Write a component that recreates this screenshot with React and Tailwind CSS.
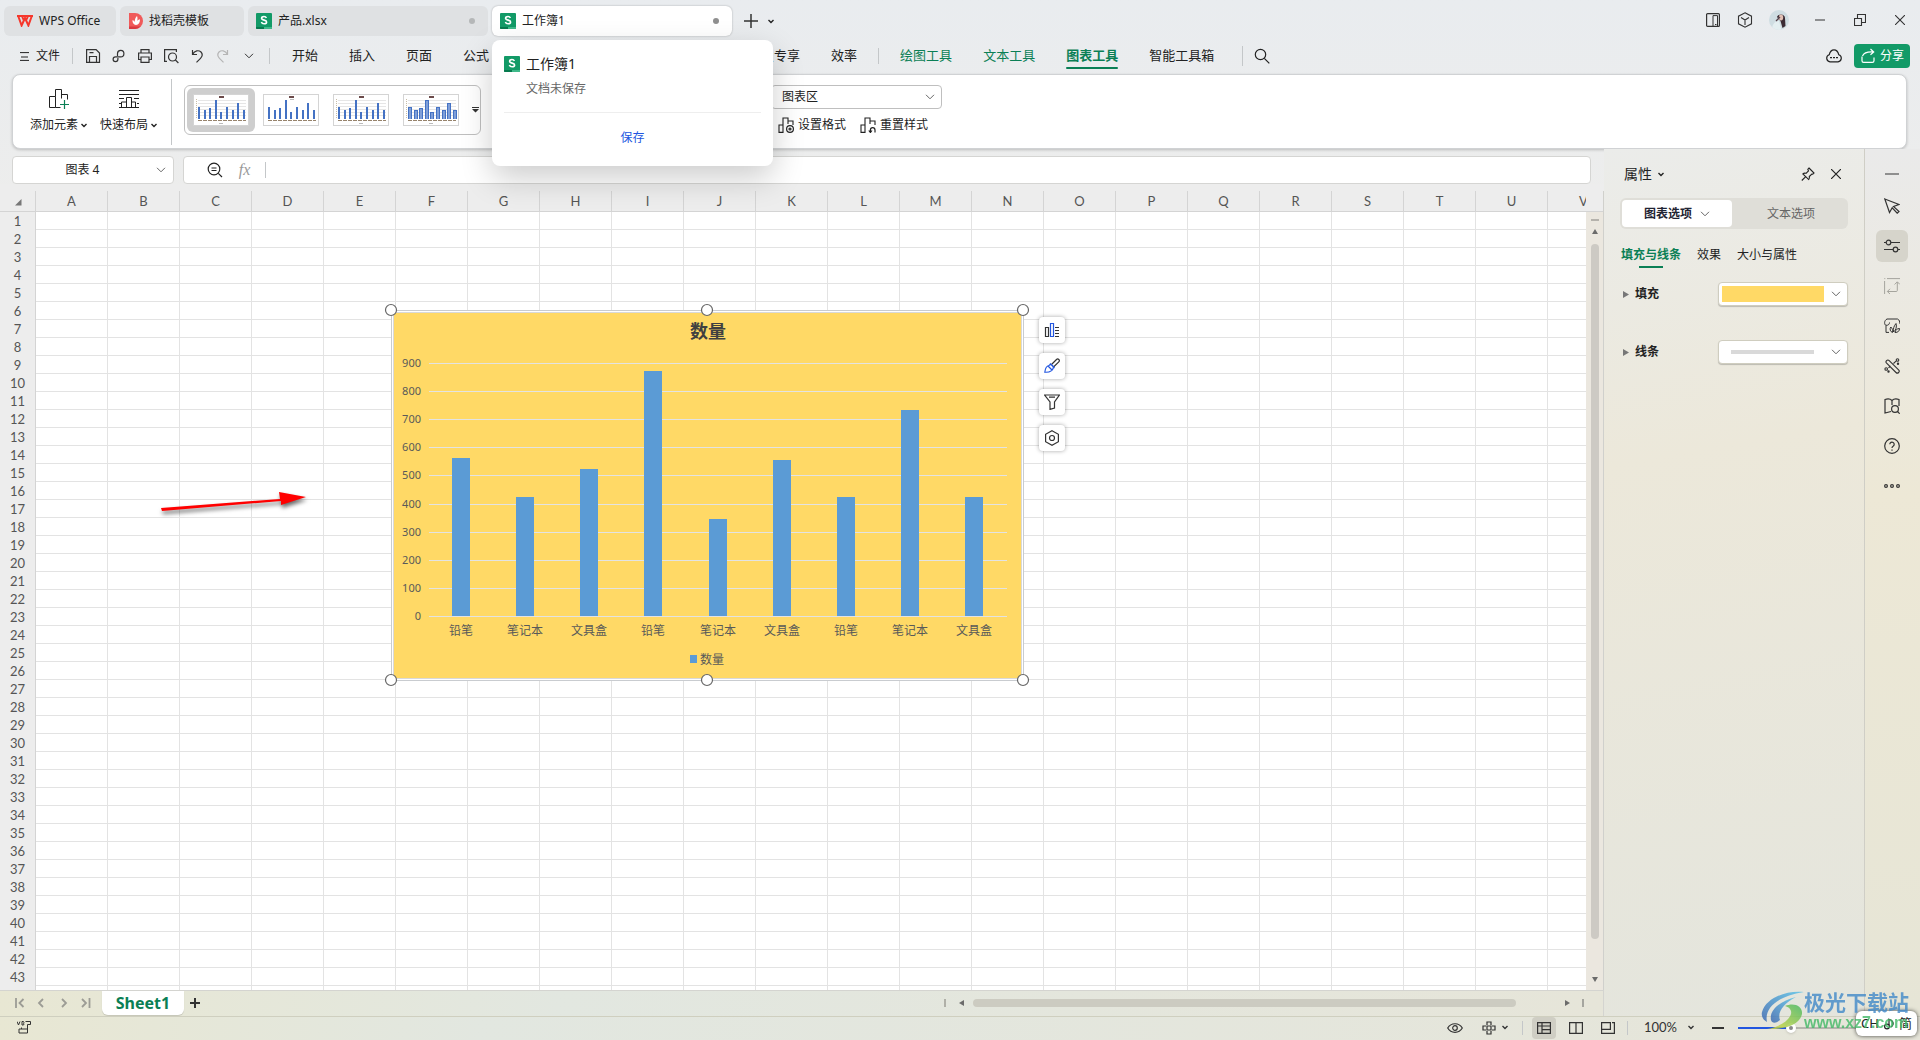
import { useState } from "react";
import clsx from "clsx";

const COLUMNS = "ABCDEFGHIJKLMNOPQRSTUV".split("");
const ROWS = Array.from({ length: 43 }, (_, i) => i + 1);

const MENU = ["开始", "插入", "页面", "公式"];
const MEMBER_MENU = ["会员专享", "效率"];
const TOOL_MENU = ["绘图工具", "文本工具", "图表工具"];

const SALES = [
  { name: "铅笔", value: 562 },
  { name: "笔记本", value: 423 },
  { name: "文具盒", value: 523 },
  { name: "铅笔", value: 872 },
  { name: "笔记本", value: 345 },
  { name: "文具盒", value: 555 },
  { name: "铅笔", value: 423 },
  { name: "笔记本", value: 733 },
  { name: "文具盒", value: 423 },
];

function Icon({ size = 16, className, children, ...rest }) {
  return (
    <svg
      width={size}
      height={size}
      viewBox={`0 0 ${size} ${size}`}
      fill="none"
      stroke="currentColor"
      strokeWidth="1.2"
      className={clsx("shrink-0", className)}
      aria-hidden="true"
      {...rest}
    >
      {children}
    </svg>
  );
}

function Chevron({ wide, className }) {
  return wide ? (
    <svg width="10" height="6" viewBox="0 0 10 6" fill="none" stroke="currentColor" className={clsx("shrink-0", className)}>
      <path d="M1 .8 5 4.8 9 .8" />
    </svg>
  ) : (
    <svg width="6" height="5" viewBox="0 0 6 5" fill="none" stroke="currentColor" strokeWidth="1.4" className={clsx("shrink-0", className)}>
      <path d="M.5 1 3 3.5 5.500 1" />
    </svg>
  );
}

function SheetLogo() {
  return (
    <svg width="16" height="16" viewBox="0 0 16 16" className="shrink-0">
      <rect width="16" height="16" rx="1" fill="#129a67" />
      <path d="M0 14h8v2H1a1 1 0 0 1-1-1z" fill="#067a4e" />
      <path d="M8 14h8v1a1 1 0 0 1-1 1H8z" fill="#3fb98a" />
      <path d="M10.400 5C9.900 3.900 9 3.500 8 3.500c-1.400 0-2.400.7-2.400 1.800 0 2.500 5 1.200 5 3.600 0 1.200-1.100 1.900-2.500 1.900-1.300 0-2.300-.6-2.700-1.800" fill="none" stroke="#fff" strokeWidth="1.600" />
    </svg>
  );
}

function TitleBar() {
  return (
    <header className="flex h-[38px] shrink-0 items-start pt-[6px] pl-1 text-xs">
      <div className="flex items-center gap-1">
        <button className="flex h-[30px] w-[112px] items-center gap-[6px] rounded-md bg-[#dfe1e3] pl-[13px]">
          <svg width="16" height="12" viewBox="0 0 16 12" className="shrink-0" fill="none" stroke="#f5372c" strokeWidth="2">
            <path d="M0 1h16M1.200 1 4.600 10.500 8 3l3.400 7.500L14.800 1M5 1l1.600 4M11 1 9.600 4.500" />
          </svg>
          WPS Office
        </button>
        <button className="flex h-[30px] w-[124px] items-center gap-[6px] rounded-md bg-[#dfe1e3] pl-[9px]">
          <svg width="14" height="16" viewBox="0 0 14 16" className="shrink-0">
            <path d="M0 0h6a8 8 0 0 1 0 16H0z" fill="#f05a5a" />
            <path d="M0 13.500h11.500A8 8 0 0 1 6 16H0z" fill="#d93a41" />
            <path d="M7 12c-2.500-.4-4-2.400-3.400-5 1.300.5 1.800 1.400 2 2.200C5.800 6.500 6.300 4.500 8 3c.7 1.700.6 3.500.2 4.800C9 6.900 10 6.400 11 6.300 11 9.500 9.800 11.700 7 12z" fill="#fff" />
          </svg>
          找稻壳模板
        </button>
        <button className="flex h-[30px] w-[240px] items-center gap-[6px] rounded-md bg-[#dfe1e3] pr-[13px] pl-2">
          <SheetLogo />
          产品.xlsx
          <span className="ml-auto size-[6px] rounded-full bg-[#b5b7b8]" />
        </button>
        <div className="relative">
          <button className="flex h-[30px] w-[240px] items-center gap-[6px] rounded-md bg-white pr-[13px] pl-2 shadow-[0_0_2px_rgba(0,0,0,0.3)]">
            <SheetLogo />
            工作簿1
            <span className="ml-auto size-[6px] rounded-full bg-[#8f8f8f]" />
          </button>
          <TabPreview />
        </div>
      </div>
      <button className="mt-2 ml-3 text-[#333]" aria-label="新建">
        <Icon size={14}><path d="M7 0v14M0 7h14" strokeWidth="1.500" /></Icon>
      </button>
      <button className="mt-[13px] ml-[10px]" aria-label="标签列表"><Chevron /></button>

      <div className="mt-1 mr-[15px] ml-auto flex items-center text-[#333]">
        <button aria-label="分屏">
          <Icon size={14}><rect x=".6" y=".6" width="12.800" height="12.800" rx="1" /><path d="M7 13.400V2.600h4.500v10.800M9 11.500h1.500" strokeWidth="1" /></Icon>
        </button>
        <button className="ml-[17px]" aria-label="应用"><Icon><path d="M8 .8 14.500 4.200v7.600L8 15.200 1.500 11.800V4.200zM4 5.500 8 8l4-2.500M8 8v5" strokeWidth="1.100" /></Icon></button>
        <button className="ml-4 overflow-hidden rounded-full" aria-label="账号">
          <svg width="20" height="20" viewBox="0 0 20 20">
            <rect width="20" height="20" fill="#cfdde2" />
            <path d="M8 7c2-4 8-3 8 1l.5 8-3 2-2-7z" fill="#3b2b33" />
            <ellipse cx="12" cy="7.500" rx="2.200" ry="3" fill="#e2c1b5" />
            <path d="M3 20c0-6 3-9 7-9l2.500 9z" fill="#e4eff1" />
            <path d="M7 11l4-4" stroke="#57434b" strokeWidth="1.300" />
          </svg>
        </button>
        <button className="ml-[26px]" aria-label="最小化"><Icon size={10}><path d="M0 5h10" strokeWidth="1" /></Icon></button>
        <button className="ml-[29px]" aria-label="还原"><Icon size={12}><path d="M.5 4.500h7v7h-7zM3.500 4.500v-4h8v8h-4" strokeWidth="1.100" /></Icon></button>
        <button className="ml-[29px]" aria-label="关闭"><Icon size={10}><path d="M0 0 10 10M10 0 0 10" strokeWidth="1.100" /></Icon></button>
      </div>
    </header>
  );
}

// Card that drops under the hovered document tab
function TabPreview() {
  return (
    <div className="absolute top-[34px] left-0 z-20 flex h-[126px] w-[281px] flex-col rounded-lg bg-white px-3 pt-3 shadow-[0_12px_32px_rgba(0,0,0,0.2)]">
      <div className="flex items-center gap-[6px] text-sm leading-6">
        <SheetLogo />
        工作簿1
      </div>
      <p className="mt-[5px] ml-[22px] text-xs leading-4 text-[#666]">文档未保存</p>
      <div className="mt-[15px] border-t border-[#eee]" />
      <button className="mt-[17px] text-xs leading-4 text-[#2256e0]">保存</button>
    </div>
  );
}

function Separator({ className }) {
  return <span className={clsx("w-px shrink-0 bg-[#c4c7c9]", className)} />;
}

function MenuBar() {
  return (
    <nav className="flex h-9 shrink-0 items-center px-5 text-[13px]">
      <button className="flex items-center gap-[7px] text-xs">
        <Icon size={9}><path d="M0 .6h9M1 5h7M0 8.400h9" strokeWidth="1" /></Icon>
        文件
      </button>
      <Separator className="ml-3 h-4" />
      <div className="flex items-center pl-3 text-[#333]">
        <button aria-label="保存"><Icon><path d="M1.600 1.600h9.500l3.400 3.400v9.400H1.600zM4.500 14.400V8.500h7v5.900M4.500 4.600h4" /></Icon></button>
        <button className="ml-[10px]" aria-label="输出"><Icon><path d="M6.500 8V5.500A3.200 3.200 0 1 1 9.700 8.800H4.500a2.400 2.400 0 1 0 2.400 2.400V10" /></Icon></button>
        <button className="ml-[10px]" aria-label="打印"><Icon><path d="M4 5V1.600h8V5M4 11.500H1.600V5h12.800v6.500H12M4 9h8v5.400H4z" /></Icon></button>
        <button className="ml-[10px]" aria-label="打印预览"><Icon><path d="M4 13.400H1.600V1.600h11.800V4" /><circle cx="9.500" cy="9" r="4" /><path d="m12.400 12 3 3" /></Icon></button>
        <button className="ml-[10px]" aria-label="撤销"><Icon><path d="M3.500 2v4.500H8M3.500 6.300C6 2.500 9.500 1.800 12 4c2 2.300 1.300 4.500-.5 6.300L7.500 14.400" /></Icon></button>
        <button className="ml-[10px] text-[#b5b5b5]" aria-label="恢复"><Icon><path d="M12.500 2v4.500H8M12.500 6.300C10 2.500 6.500 1.800 4 4c-2 2.300-1.300 4.500.5 6.300l4 4.100" /></Icon></button>
        <button className="ml-[13px]" aria-label="更多"><Chevron wide /></button>
      </div>
      <Separator className="ml-[15px] h-4" />
      <div className="flex items-center gap-[31px] pl-[22px]">
        {MENU.map((item) => (
          <button key={item} className="shrink-0">{item}</button>
        ))}
      </div>
      <div className="flex items-center gap-[31px] pl-[259px]">
        {MEMBER_MENU.map((item) => (
          <button key={item} className="shrink-0">{item}</button>
        ))}
      </div>
      <Separator className="ml-[21px] h-4" />
      <div className="flex items-center gap-[31px] pl-[21px]">
        {TOOL_MENU.map((item) => (
          <button
            key={item}
            className={clsx("relative shrink-0 text-[#0a7f55]", item === "图表工具" && "font-bold")}
          >
            {item}
            {item === "图表工具" && <span className="absolute inset-x-0 -bottom-[3px] h-[2px] rounded bg-[#0a7f55]" />}
          </button>
        ))}
        <button className="shrink-0">智能工具箱</button>
      </div>
      <Separator className="ml-7 h-5" />
      <button className="ml-[11px]" aria-label="搜索"><Icon><circle cx="6.500" cy="6.500" r="5.200" /><path d="m10.300 10.300 5 5" /></Icon></button>
      <div className="-mr-[10px] ml-auto flex items-center gap-3">
        <button aria-label="云端"><Icon><path d="M4 13.800a3.600 3.600 0 0 1-.8-7C4 3.500 5.500 1.800 8 1.800s4 1.700 4.800 5a3.600 3.600 0 0 1-.8 7zM4 9.600h2M7 9.600h2M10 9.600h2" /></Icon></button>
        <button className="flex h-6 w-14 items-center justify-center gap-1 rounded bg-[#129a67] text-xs text-white">
          <Icon><path d="M2 8.500v4.300c0 .9.600 1.600 1.600 1.600h8.800c1 0 1.600-.7 1.600-1.600V9.500M2.500 8C4 4.500 7 3.500 13.500 4M10.500 1l3.200 3-3.200 2.800" /></Icon>
          分享
        </button>
      </div>
    </nav>
  );
}

// Small previews of the chart styles; bars are measured up from the baseline
const THUMB_BARS = [12, 9, 11, 19, 7, 12, 9, 16, 9];

function StyleThumb({ variant, active }) {
  const wide = variant === 3;
  return (
    <button
      className={clsx("rounded-md p-[6px]", active && "bg-[#cecece]")}
      aria-label={`图表样式 ${variant + 1}`}
    >
      <svg width="56" height="32" viewBox="0 0 56 32" shapeRendering="crispEdges" className="block">
        <rect x=".5" y=".5" width="55" height="31" fill="#fff" stroke="#d4d4d4" />
        <rect x="26" y="2" width="5" height="2" fill="#6b4a4a" />
        {variant !== 1 && [6, 9, 12, 15, 18, 21].map((y) => (
          <path key={y} d={`M5 ${y}.5h48`} stroke="#e6e6e6" />
        ))}
        {variant !== 1 && <path d="M3.500 5v20" stroke="#c8bda8" strokeDasharray="1 1" />}
        <path d="M5 26.500h48" stroke="#97836c" strokeDasharray="4 1" />
        <path d={variant === 1 ? "M27 5.500h4" : "M26 29.500h4"} stroke="#bbb" />
        {THUMB_BARS.map((h, i) => (
          <g key={i}>
            <rect x={Math.round(5 + i * 5.600)} y={25 - h} width={wide ? 4 : 2} height={h} fill="#4472c4" />
            {wide && <rect x={Math.round(6 + i * 5.600)} y={26 - h} width="2" height={h - 1} fill="#7f9fd8" />}
          </g>
        ))}
      </svg>
    </button>
  );
}

function Bars({ children, size = 16 }) {
  return (
    <Icon size={size}>
      <path d="M1 15.400V8h4v7.400zM5 15.400V1h5v6M10 4h5v4" strokeWidth="1.100" />
      {children}
    </Icon>
  );
}

function Ribbon() {
  return (
    <section className="mr-[13px] ml-3 flex h-[75px] shrink-0 items-start rounded-lg border border-[#d0d2d4] bg-white pt-1 text-xs shadow-[0_1px_3px_rgba(0,0,0,0.2)]">
      <div className="flex gap-[13px] pt-2 pl-[17px]">
        <button className="flex flex-col items-center gap-[6px]">
          <Icon size={20} className="h-6">
            <path d="M.5 18.500v-11h6v11zM6.500 7.500v-7h6v9M12.500 5.500h6v5M6.500 18.500h5" strokeWidth="1" />
            <path d="M15.500 11v9M11 15.500h9" stroke="#0a7f55" />
          </Icon>
          <span className="flex items-center gap-[3px] leading-4">添加元素 <Chevron /></span>
        </button>
        <button className="flex flex-col items-center gap-[6px]">
          <Icon size={20} className="h-6">
            <path d="M0 1.500h20M0 5.500h20M0 9.500h5M15 9.500h5M0 14.500h2M18 14.500h2M0 18.500h20M2.500 18v-5h5v5M7.500 13V8.500h5V18M12.500 13h4v5" strokeWidth="1" />
          </Icon>
          <span className="flex items-center gap-[3px] leading-4">快速布局 <Chevron /></span>
        </button>
      </div>
      <Separator className="ml-[14px] h-[66px]" />
      <div className="mt-[6px] ml-3 flex h-[50px] w-[297px] items-center gap-[2px] rounded-md border border-[#bfbfbf] pl-[2px]">
        {[0, 1, 2, 3].map((v) => (
          <StyleThumb key={v} variant={v} active={v === 0} />
        ))}
        <button aria-label="更多样式" className="ml-[5px]">
          <svg width="7" height="6" viewBox="0 0 7 6"><path d="M0 0h7v1H0zM0 2h7L3.500 5.500z" fill="#333" /></svg>
        </button>
      </div>
      <div className="ml-[290px] flex flex-col gap-2 pt-[6px]">
        <label className="relative flex w-[171px] items-center">
          <select aria-label="图表元素" className="h-6 w-full appearance-none rounded border border-[#bfbfbf] pl-[10px]">
            <option>图表区</option>
          </select>
          <Chevron wide className="pointer-events-none absolute right-[7px] text-[#666]" />
        </label>
        <div className="flex gap-[14px] pl-[7px]">
          <button className="flex items-center gap-1 leading-4">
            <Bars><circle cx="12" cy="12" r="3.400" /><circle cx="12" cy="12" r="1" /></Bars>
            设置格式
          </button>
          <button className="flex items-center gap-1 leading-4">
            <Bars><path d="M15 15.500v-2.500a2.300 2.300 0 0 0-4.600 0v2M8.800 13.500l1.600 2 1.600-2" /></Bars>
            重置样式
          </button>
        </div>
      </div>
    </section>
  );
}

function FormulaBar() {
  return (
    <div className="mt-[7px] flex h-7 shrink-0 gap-[9px] pr-[13px] pl-3 text-xs">
      <div className="flex w-[162px] items-center rounded border border-[#d5d5d3] bg-white pr-[7px]">
        <input aria-label="名称框" defaultValue="图表 4" className="w-full min-w-0 pr-1 text-center outline-none" />
        <button aria-label="名称列表"><Chevron wide className="text-[#666]" /></button>
      </div>
      <div className="flex flex-1 items-center rounded border border-[#d5d5d3] bg-white pl-[23px]">
        <button aria-label="查找"><Icon><circle cx="7" cy="7" r="5.800" /><path d="m11.300 11.300 3.700 3.700M4.500 6h5M4.500 8.500h5" /></Icon></button>
        <button className="w-[37px] pl-[6px] font-['Liberation_Serif',serif] text-base text-[#999] italic" aria-label="插入函数">fx</button>
        <Separator className="ml-[5px] h-4" />
        <input aria-label="编辑栏" className="h-full flex-1 px-2 outline-none" />
      </div>
    </div>
  );
}

const BASE = 316;
const SCALE = 253 / 900;

// Embedded bar chart with its selection frame and handles
function SalesChart() {
  return (
    <svg
      width="655"
      height="392"
      viewBox="0 0 655 392"
      className="absolute top-[109px] left-[380px] font-['Noto_Sans','Noto_Sans_CJK_SC',sans-serif] text-xs"
      role="img"
      aria-label="数量"
    >
      <g shapeRendering="crispEdges">
        <rect x="11.500" y="10.500" width="632" height="370" fill="#fff" stroke="#c9ccd0" />
        <rect x="13.500" y="12.500" width="628" height="366" fill="#ffd966" stroke="#d9d9d9" />
        {[0, 100, 200, 300, 400, 500, 600, 700, 800, 900].map((v) => (
          <path key={v} d={`M49 ${Math.round(BASE - v * SCALE)}.5h578`} stroke="#e3e3e3" />
        ))}
        {SALES.map((d, i) => (
          <rect
            key={i}
            x={Math.round(72 + i * 64.125)}
            y={Math.round(BASE - d.value * SCALE)}
            width="18"
            height={Math.round(d.value * SCALE)}
            fill="#5b9bd5"
          />
        ))}
        <rect x="310" y="355" width="7" height="8" fill="#5b9bd5" />
      </g>
      <text x="328" y="38" textAnchor="middle" className="fill-[#404040] text-[18px] font-bold">数量</text>
      <g className="fill-[#595959]">
        {[0, 100, 200, 300, 400, 500, 600, 700, 800, 900].map((v) => (
          <text key={v} x="41" y={Math.round(BASE - v * SCALE) + 4} textAnchor="end" className="text-[11px]">{v}</text>
        ))}
        {SALES.map((d, i) => (
          <text key={i} x={Math.round(81 + i * 64.125)} y="335" textAnchor="middle">{d.name}</text>
        ))}
        <text x="320" y="364">数量</text>
      </g>
      {[11, 327, 643].map((x) => [10, 380].map((y) => (
        <circle key={`${x}-${y}`} cx={x} cy={y} r="5.500" fill="#fff" stroke="#666" strokeWidth="1.200" />
      )))}
    </svg>
  );
}

function ChartTools() {
  const tools = [
    { label: "图表元素", icon: <Icon><path d="M1.500 5.500h3v9h-3z" /><path d="M6.500 1.500h3v13h-3z" stroke="#2256e0" /><path d="M11 5.500h4M11 8.500h4M11 11.500h4M11 14.500h4" /></Icon> },
    { label: "图表样式", icon: <Icon><path d="M7.500 6.500 12.500 1.500a1.600 1.600 0 0 1 2.300 2.300L9.500 9" /><path d="M5 7.500c1.500-2 4.500 0 4.500 1.500C9 12 6 14.500.8 14.200 1.200 10.500 2.500 8 5 7.500zM6 5.500 10.500 10M4 8l4 4" stroke="#2256e0" /></Icon> },
    { label: "图表筛选", icon: <Icon><path d="M.6 1h14.800L10.500 8v6L6 15.400V8zM5 3.200h6" /></Icon> },
    { label: "图表设置", icon: <Icon><path d="M8 .8 14.400 4.300v7.400L8 15.200 1.600 11.700V4.300z" /><circle cx="8" cy="8" r="2.500" /></Icon> },
  ];
  return (
    <div className="absolute top-[126px] left-[1039px] flex flex-col gap-[10px]">
      {tools.map((t) => (
        <button key={t.label} aria-label={t.label} className="flex size-[26px] items-center justify-center rounded bg-white text-[#333] shadow-[0_0_4px_rgba(0,0,0,0.35)]">
          {t.icon}
        </button>
      ))}
    </div>
  );
}

function SheetGrid() {
  return (
    <div className="flex min-h-0 flex-1 bg-[#ededed] pt-[7px]">
      <div className="relative min-w-0 flex-1 overflow-hidden">
        <table className="w-[1620px] table-fixed border-separate border-spacing-0 bg-white font-['Lato',sans-serif] text-[13px] leading-[17px] text-[#555]">
          <thead>
            <tr>
              <th className="h-[21px] w-9 border-r border-b border-[#d4d4d4] bg-[#ededed] p-0">
                <svg width="7" height="7" viewBox="0 0 7 7" className="mt-[2px] ml-[15px]"><path d="M6.500 0v6.500H0z" fill="#777" /></svg>
              </th>
              {COLUMNS.map((c) => (
                <th key={c} scope="col" className="h-[21px] border-r border-b border-[#d4d4d4] bg-[#ededed] p-0 font-normal">{c}</th>
              ))}
            </tr>
          </thead>
          <tbody>
            {ROWS.map((r) => (
              <tr key={r}>
                <th scope="row" className="h-[18px] border-r border-[#d4d4d4] bg-[#ededed] p-0 font-normal">{r}</th>
                {COLUMNS.map((c) => (
                  <td key={c} className="h-[18px] border-r border-b border-[#e3e3e3] p-0" />
                ))}
              </tr>
            ))}
            <tr>
              <th className="h-[18px] border-r border-[#d4d4d4] bg-[#ededed] p-0" />
              {COLUMNS.map((c) => (
                <td key={c} className="border-r border-[#e3e3e3] p-0" />
              ))}
            </tr>
          </tbody>
        </table>
        <SalesChart />
        <ChartTools />
        <svg width="160" height="36" viewBox="0 0 160 36" className="absolute top-[292px] left-[154px] drop-shadow-[1px_3px_2px_rgba(0,0,0,0.6)]">
          <path d="M7 25 126 16l-1-7 27 5-25 8v-4L8 28z" fill="#f00" />
        </svg>
      </div>
      <div className="flex w-[18px] flex-col border-r border-[#d0d0cc] pt-[21px]">
        <div className="-mt-px flex flex-1 flex-col items-center border-t border-[#d4d4d4] bg-[#ebe7df] pt-[7px] pb-2">
          <span className="h-[2px] w-2 bg-[#b5b2ac]" />
          <svg width="6" height="5" viewBox="0 0 6 5" className="mt-2"><path d="M3 0l3 5H0z" fill="#6b6b6b" /></svg>
          <span className="mt-[10px] mb-[38px] w-2 flex-1 rounded-full bg-[#cdcac4]" />
          <svg width="6" height="5" viewBox="0 0 6 5"><path d="M3 5l3-5H0z" fill="#6b6b6b" /></svg>
        </div>
      </div>
    </div>
  );
}

function SheetTabs() {
  return (
    <div className="flex h-[26px] shrink-0 items-center border-t border-r border-[#d4d4d0] bg-linear-to-r from-[#e8e7d3] via-[#e2e7e0] via-35% to-[#e6e5d9] pb-[1px]">
      <div className="flex items-center gap-3 pl-[15px] text-[#9c9c95]">
        {[
          ["第一张", "M1 0v10M8.500 1 4.500 5l4 4"],
          ["上一张", "M6 1 2 5l4 4"],
          ["下一张", "M3 1l4 4-4 4"],
          ["最后一张", "M1 1l4 4-4 4M8.500 0v10"],
        ].map(([label, d]) => (
          <button key={label} aria-label={label}><Icon size={10}><path d={d} strokeWidth="1.800" /></Icon></button>
        ))}
      </div>
      <button className="ml-[11px] h-6 w-[82px] self-start rounded-b-md bg-white font-['Noto_Sans',sans-serif] text-base leading-[22px] font-bold text-[#0a7f55] shadow-[0_1px_1px_rgba(0,0,0,0.15)]">Sheet1</button>
      <button className="ml-[6px]" aria-label="新建工作表"><Icon size={10}><path d="M5 0v10M0 5h10" strokeWidth="2" stroke="#333" /></Icon></button>
      <div className="ml-auto flex w-[659px] items-center pr-[19px]">
        <span className="h-2 w-[2px] bg-[#b0b0a8]" />
        <svg width="5" height="6" viewBox="0 0 5 6" className="ml-[13px]"><path d="M5 0v6L0 3z" fill="#6b6b6b" /></svg>
        <span className="ml-[9px] h-2 w-[543px] rounded-full bg-[#cccbc1]" />
        <svg width="5" height="6" viewBox="0 0 5 6" className="ml-auto"><path d="M0 0v6l5-3z" fill="#6b6b6b" /></svg>
        <span className="ml-3 h-2 w-[2px] bg-[#a5a59f]" />
      </div>
    </div>
  );
}

function PropertyRow({ label, children }) {
  return (
    <div className="flex items-center">
      <button className="flex items-center gap-[6px] pl-[3px] font-bold">
        <svg width="6" height="7" viewBox="0 0 6 7"><path d="M0 0l6 3.500L0 7z" fill="#777" /></svg>
        {label}
      </button>
      <button aria-haspopup="listbox" aria-label={label} className="ml-auto flex h-6 w-[130px] items-center justify-between rounded border border-[#cfcdbf] bg-white pr-[6px] pl-[3px] shadow-[0_1px_1px_rgba(0,0,0,0.2)]">
        {children}
        <Chevron wide className="text-[#666]" />
      </button>
    </div>
  );
}

function PropertyPanel() {
  const [tab, setTab] = useState("填充与线条");
  return (
    <aside className="flex w-[261px] shrink-0 flex-col border-r border-[#cfcec6] bg-linear-170 from-[#ebecea] via-[#ece8da] via-35% to-[#e4e5dd] pt-4 pr-4 pl-4 text-xs">
      <div className="flex h-[18px] items-center pl-1 text-sm">
        属性
        <Chevron className="ml-[6px]" />
        <button className="ml-auto" aria-label="固定"><Icon size={14}><path d="M8 1l5 5-1.200 1.200-1-.2-2.500 2.500c.4 1.500.2 2.300-.6 3.100L1.900 6.900c.8-.8 1.600-1 3.100-.6L7.500 3.800 6.800 2.400zM4.500 9.800.8 13.500" strokeWidth="1.100" /></Icon></button>
        <button className="mr-[7px] ml-[16px]" aria-label="关闭面板"><Icon size={10}><path d="M0 0 10 10M10 0 0 10" /></Icon></button>
      </div>
      <div className="mt-[15px] flex h-[31px] items-center rounded-md bg-[#dfded8] p-[2px]">
        <button className="flex h-[27px] w-[110px] items-center justify-center gap-2 rounded bg-white font-semibold text-[#1f2433]">
          图表选项
          <Chevron wide className="text-[#666]" />
        </button>
        <button className="flex-1 pl-1 text-[#666]">文本选项</button>
      </div>
      <div className="mt-[17px] flex gap-4 pl-px leading-[18px]">
        {["填充与线条", "效果", "大小与属性"].map((t) => (
          <button key={t} onClick={() => setTab(t)} className={clsx("relative", t === tab && "font-bold text-[#0a7f55]")}>
            {t}
            {t === tab && <span className="absolute -bottom-1 left-1/2 h-[2px] w-6 -translate-x-1/2 bg-[#0a7f55]" />}
          </button>
        ))}
      </div>
      <div className="mt-[18px] flex flex-col gap-[34px]">
        <PropertyRow label="填充">
          <span className="h-4 w-[102px] bg-[#ffd966]" />
        </PropertyRow>
        <PropertyRow label="线条">
          <span className="ml-[9px] h-1 w-[83px] bg-[#d9d9d9]" />
        </PropertyRow>
      </div>
    </aside>
  );
}

function SideStrip() {
  const tools = [
    { label: "选择", icon: <path d="M.8 1 15 6.500 9.500 8.500l5.500 5-1.800 1.700-5-5.400L5.500 14.500z" /> },
    { label: "属性", active: true, icon: <><circle cx="4.500" cy="4.500" r="2.300" /><path d="M0 4.500h2.200M7 4.500h9M0 11.500h9M14 11.500h2" /><circle cx="11.500" cy="11.500" r="2.300" /></> },
    { label: "分析", muted: true, icon: <path d="M.6 16V3M3 .6h13M.3.600h1M3.500 13.500h8.800q1 0 1-1V4M6 10.800l-2.700 2.700L6 16M10.600 6.500 13.300 3.800 16 6.500" strokeWidth="1" /> },
    { label: "素材", icon: <path d="M5 14.400H2V7.500C0 6.500 0 2.500 3 1h10.500c2 .8 2.500 3 2 4.500M2 7.300C4.500 7.500 5.500 6 5.500 4.500M8.500 14.500c-2.500-1-3-3.500-1.700-5.500 1.500 1.500 2.200 3 1.700 5.500zM9.500 14c-.5-3 .3-6 2.500-8.500 1 3.500 0 6.500-2.500 8.500zM11 14.500c.5-2.500 2-4 4.500-4 0 2.500-1.500 4-4.500 4z" strokeWidth="1" /> },
    { label: "工具", icon: <><path d="M2.600 5.200a1.800 1.800 0 0 1 2.600-2.600l9.400 9.300a1.800 1.800 0 0 1-2.600 2.600zM4.500 9.800 6.500 8M9.500 5.500l2.500-2.300" strokeWidth="1.100" /><circle cx="13.500" cy="2" r="1.300" strokeWidth="1.100" /><circle cx="2.200" cy="11" r="1.300" strokeWidth="1.100" /><circle cx="14" cy="5.800" r=".6" /><circle cx="4.500" cy="13.500" r=".6" /></> },
    { label: "词典", icon: <><path d="M7 13.500 1 15V1.500C4 .5 6.500 1 8 2.500 9.500 1 12 .5 15 1.500V8M8 2.500V7" /><circle cx="11" cy="11" r="3.400" /><path d="m13.500 13.500 2.200 2.200" /></> },
    { label: "帮助", icon: <><circle cx="8" cy="8" r="7.300" /><path d="M5.800 6.200a2.200 2.200 0 1 1 3.300 2C8.300 8.700 8 9 8 10M8 11.500v1.300" /></> },
    { label: "更多", icon: <><circle cx="2" cy="8" r="1.400" /><circle cx="8" cy="8" r="1.400" /><circle cx="14" cy="8" r="1.400" /></> },
  ];
  return (
    <aside className="flex w-[55px] shrink-0 flex-col items-center bg-linear-to-b from-[#eaeaea] via-[#ede8d6] via-40% to-[#e6e5d6] pt-6 pr-px text-[#333]">
      <span className="mb-[15px] h-[2px] w-[14px] bg-[#8f8f8f]" />
      <div className="flex flex-col gap-2">
        {tools.map((t) => (
          <button
            key={t.label}
            aria-label={t.label}
            className={clsx("flex size-8 items-center justify-center rounded-md", t.active && "bg-[#d6d4cb]", t.muted && "text-[#a5a49d]")}
          >
            <Icon>{t.icon}</Icon>
          </button>
        ))}
      </div>
    </aside>
  );
}

function StatusBar() {
  const [zoom, setZoom] = useState(40);
  return (
    <footer className="flex h-6 shrink-0 items-center border-t border-[#cfcfbf] bg-linear-to-r from-[#e8e7d3] via-[#e2e7e0] via-25% to-[#e6e5d9] pb-[2px] text-[#333]">
      <svg width="14" height="13" viewBox="0 0 14 13" fill="none" stroke="#333" className="ml-[17px]">
        <path d="M0 .5 1.500 4 3 .5M5 .5v3.500h1.500q1-1 0-1.800 1-1 0-1.700zM8.500.500h5v3h-3v8.500h-8.500v-4h8M4.500 8V6.500" />
      </svg>
      <div className="ml-auto flex items-center">
        <button aria-label="护眼模式"><Icon><path d="M.7 8C4 2.300 12 2.300 15.300 8 12 13.700 4 13.700.7 8z" /><circle cx="8" cy="8" r="2.300" /></Icon></button>
        <button aria-label="阅读模式" className="ml-[19px]"><Icon size={14}><path d="M5 4V1h4v3M5 10v3h4v-3M4 5H1v4h3M10 5h3v4h-3M5 5h4v4H5z" /></Icon></button>
        <Chevron className="ml-[6px]" />
        <Separator className="ml-[14px] h-[14px]" />
        <button aria-label="普通视图" className="ml-[9px] flex h-[22px] w-6 items-center justify-center rounded bg-[#cfcec4]"><Icon size={14}><path d="M.6 1.600h12.800v10.800H.6zM.6 5h12.800M5 1.600v10.800M5 8.600h8.400" /></Icon></button>
        <button aria-label="页面布局" className="ml-[13px]"><Icon size={14}><path d="M.6 1.600h12.800v10.800H.6zM7 1.600v10.800" /></Icon></button>
        <button aria-label="分页预览" className="ml-[18px]"><Icon size={14}><path d="M.6 1.600h8.800v6.800H.6zM.6 8.400v4h12.800V1.600H11" /></Icon></button>
        <Separator className="ml-[12px] h-[14px]" />
        <select aria-label="显示比例" className="ml-4 w-9 appearance-none font-['Lato',sans-serif] text-[13px]">
          <option>100%</option>
        </select>
        <Chevron className="ml-2" />
        <button aria-label="缩小" className="ml-[18px]" onClick={() => setZoom((z) => Math.max(0, z - 5))}><Icon size={12}><path d="M0 6h12" strokeWidth="2" /></Icon></button>
        <input
          type="range"
          aria-label="缩放"
          value={zoom}
          onChange={(e) => setZoom(Number(e.target.value))}
          className="mr-[52px] ml-[14px] h-[2px] w-[130px] appearance-none bg-linear-to-r from-[#2256e0] from-40% to-[#b5b5ad] to-40% [&::-webkit-slider-thumb]:size-[10px] [&::-webkit-slider-thumb]:appearance-none [&::-webkit-slider-thumb]:rounded-full [&::-webkit-slider-thumb]:border-[3px] [&::-webkit-slider-thumb]:border-white [&::-webkit-slider-thumb]:bg-[#888] [&::-webkit-slider-thumb]:shadow"
        />
      </div>
    </footer>
  );
}

function CornerBadges() {
  return (
    <>
      <div className="absolute right-[3px] bottom-1 z-30 flex h-[25px] w-[61px] items-center justify-center gap-1 rounded-md bg-white text-[13px] shadow-[0_0_4px_rgba(0,0,0,0.7)]">
        <span>CH</span>
        <Icon size={12}><path d="M5 1c5 1 7 5 3 8M6 1v6" /><circle cx="4" cy="8.500" r="2.400" /></Icon>
        <span>简</span>
      </div>
      <div className="pointer-events-none absolute right-[11px] bottom-2 z-40 flex items-center opacity-80">
        <svg width="44" height="42" viewBox="0 0 44 42">
          <defs>
            <linearGradient id="swirlBlue" x1="0" y1="1" x2="1" y2="0">
              <stop offset="0" stopColor="#3563b0" />
              <stop offset="1" stopColor="#55c3ea" />
            </linearGradient>
            <linearGradient id="swirlGreen" x1="0" y1="1" x2="1" y2="0">
              <stop offset="0" stopColor="#e5dc3a" />
              <stop offset="1" stopColor="#3fb65c" />
            </linearGradient>
          </defs>
          <path d="M44 2C26 0 6 8 2 22c-1 4 1 8 5 10C4 18 18 6 44 2z" fill="url(#swirlBlue)" />
          <path d="M36 7C20 11 9 20 11 30c1 4 6 3 9 0-3-8 4-17 16-23z" fill="url(#swirlBlue)" />
          <path d="M25 16c9-4 18 0 17 8-2 10-16 16-35 15 12-2 22-8 24-15 1-4-2-7-6-8z" fill="url(#swirlGreen)" />
        </svg>
        <div className="flex flex-col">
          <span className="text-[21px] leading-6 font-bold text-[#4189c9]">极光下载站</span>
          <span className="font-['Liberation_Sans',sans-serif] text-base leading-[18px] font-bold text-[#43b967]">www.xz7.com</span>
        </div>
      </div>
    </>
  );
}

export default function App() {
  return (
    <div className="relative flex h-screen flex-col overflow-hidden bg-linear-to-b from-[#e9ecef] via-[#ededec] via-20% to-[#e7e7d8] font-['Noto_Sans','Noto_Sans_CJK_SC',sans-serif] text-[#222]">
      <TitleBar />
      <MenuBar />
      <Ribbon />
      <div className="flex min-h-0 flex-1">
        <main className="flex min-w-0 flex-1 flex-col">
          <FormulaBar />
          <SheetGrid />
          <SheetTabs />
        </main>
        <PropertyPanel />
        <SideStrip />
      </div>
      <StatusBar />
      <CornerBadges />
    </div>
  );
}
